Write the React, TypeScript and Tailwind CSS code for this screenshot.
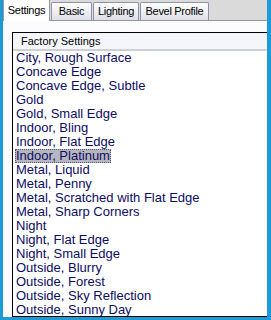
const presets = [
  "City, Rough Surface",
  "Concave Edge",
  "Concave Edge, Subtle",
  "Gold",
  "Gold, Small Edge",
  "Indoor, Bling",
  "Indoor, Flat Edge",
  "Indoor, Platinum",
  "Metal, Liquid",
  "Metal, Penny",
  "Metal, Scratched with Flat Edge",
  "Metal, Sharp Corners",
  "Night",
  "Night, Flat Edge",
  "Night, Small Edge",
  "Outside, Blurry",
  "Outside, Forest",
  "Outside, Sky Reflection",
  "Outside, Sunny Day",
];

const tabs = [
  { label: "Settings", w: "w-[47px]" },
  { label: "Basic", w: "w-[41px]" },
  { label: "Lighting", w: "w-[46px]" },
  { label: "Bevel Profile", w: "w-[69px]" },
];

export default function App() {
  return (
    <div className="w-[271px] h-[320px] overflow-hidden bg-[#1e9ad6] pl-[3px] pr-[4px] pb-[3px] font-['Liberation_Sans',Arial,sans-serif]">
      <div className="h-full flex flex-col bg-[#e4e4e4]">
        {/* tab strip */}
        <div className="flex items-end h-[21px] shrink-0 border-b border-[#919b9c] bg-[#dadada] text-[11px] tracking-[-0.3px]">
          {tabs.map((t, i) =>
            i === 0 ? (
              <div
                key={t.label}
                className={`${t.w} relative z-10 h-[22px] -mb-px bg-white border border-b-0 border-[#919b9c] border-t-[#e6a84a] flex items-center justify-center text-black`}
              >
                {t.label}
              </div>
            ) : (
              <div
                key={t.label}
                className={`${t.w} h-[18px] ml-[1px] bg-gradient-to-b from-white to-[#dedee6] border border-b-0 border-[#8e91ab] rounded-t-[2px] flex items-center justify-center text-black`}
              >
                {t.label}
              </div>
            )
          )}
        </div>

        {/* page */}
        <div className="flex-1 min-h-0 bg-[#fcfcfe] pl-[9px] pt-[11px] flex flex-col">
          <div className="flex-1 min-h-0 border-t border-l border-b border-black bg-white flex flex-col overflow-hidden">
            <div className="h-[18px] shrink-0 pl-[8px] flex items-center bg-[#f4f6fb] border-b-2 border-[#cdcfd8] text-black text-[11px]">
              Factory Settings
            </div>
            <ul className="text-[#0c0c62] text-[13px]">
              {presets.map((p) => (
                <li key={p} className="h-[14px] leading-[14px] pl-[2px]">
                  <span
                    className={
                      p === "Indoor, Platinum"
                        ? "inline-block px-[1px] bg-[#b6b6c0] outline-1 outline-dotted outline-[#55557a] -outline-offset-1"
                        : "inline-block px-[1px]"
                    }
                  >
                    {p}
                  </span>
                </li>
              ))}
            </ul>
          </div>
        </div>
      </div>
    </div>
  );
}
